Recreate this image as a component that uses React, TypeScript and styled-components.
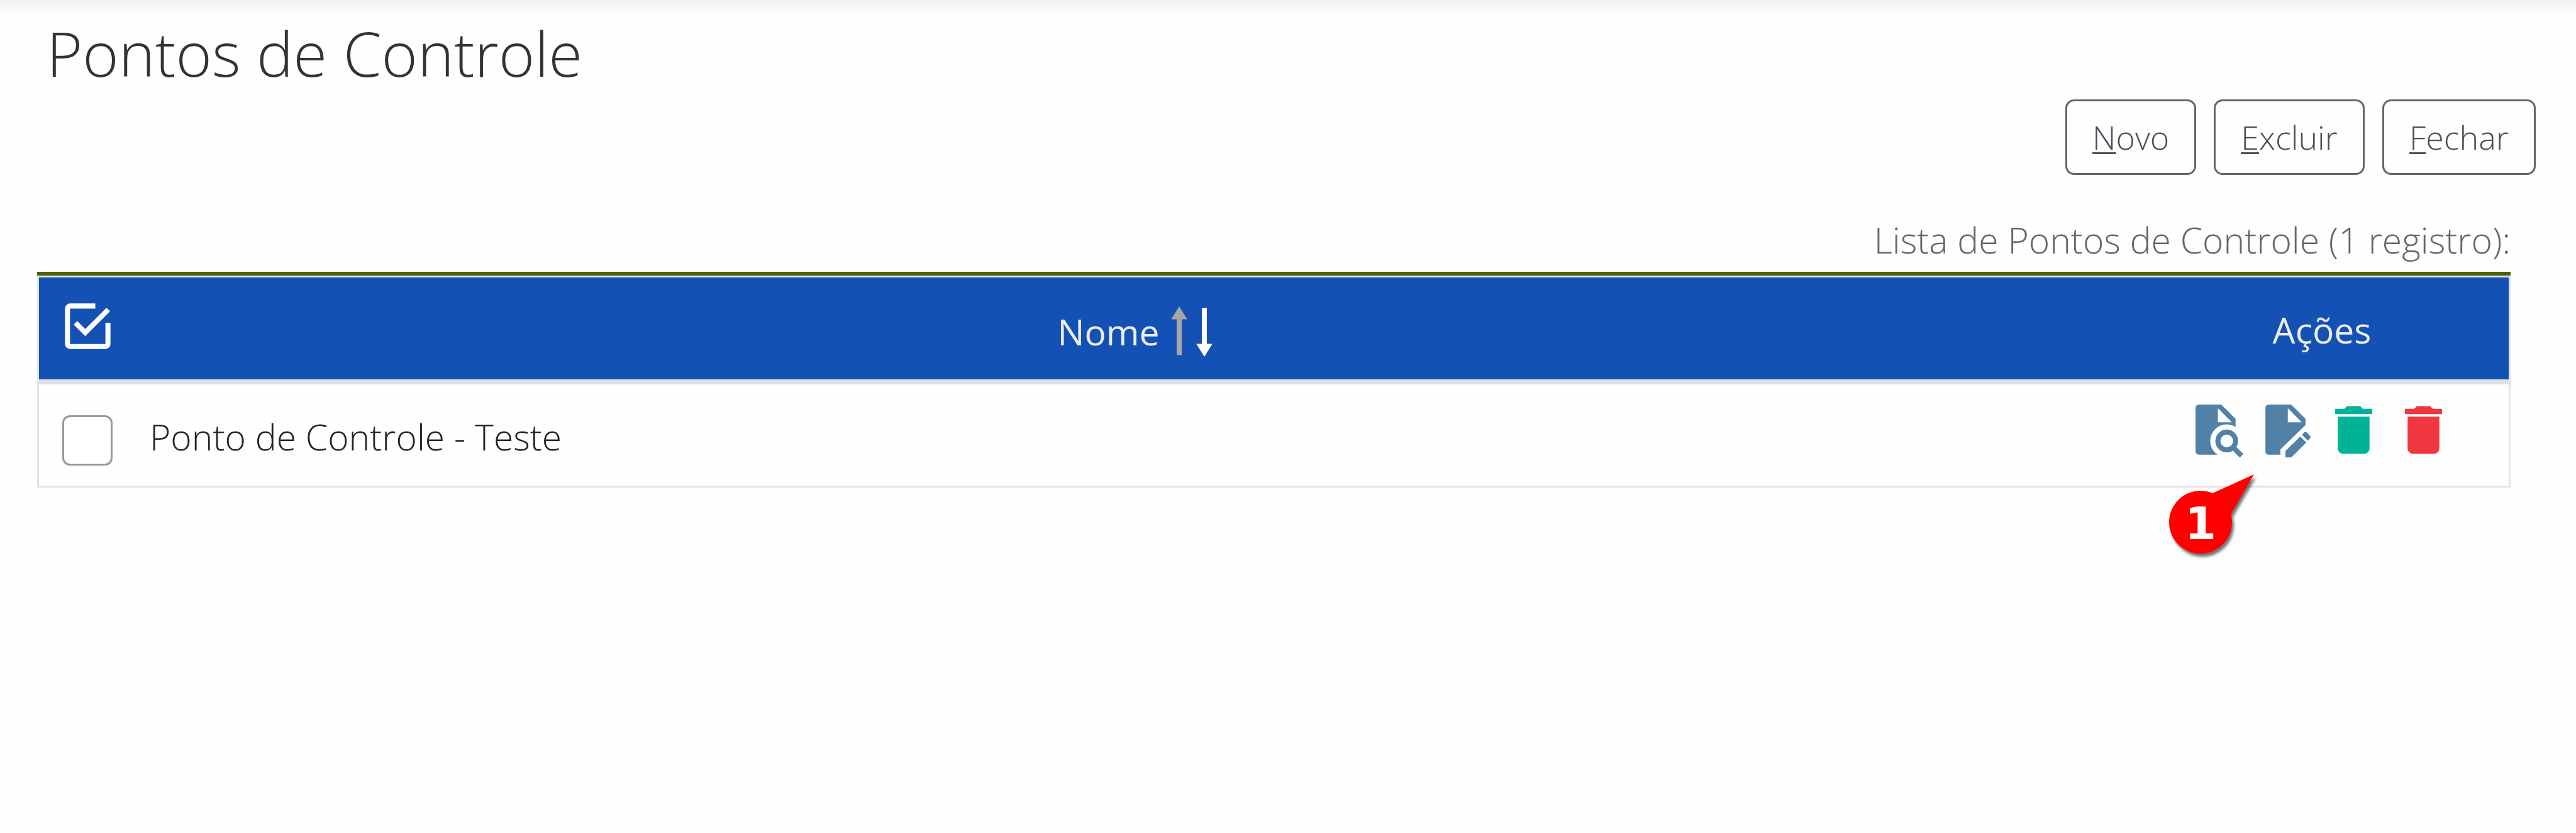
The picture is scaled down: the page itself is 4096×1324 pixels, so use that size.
import React, { useState } from "react";
import styled, { createGlobalStyle } from "styled-components";

const GlobalStyle = createGlobalStyle`
  *, *::before, *::after { box-sizing: border-box; }
  body {
    margin: 0;
    background: #fefefe;
    color: #212529;
    font-family: "Open Sans", Lato, sans-serif;
    font-size: 57px;
    font-weight: 300;
    line-height: 80px;
  }
  button, input { font: inherit; margin: 0; }
`;

const Page = styled.main`
  min-height: 100vh;
  padding-bottom: 64px;
  background: linear-gradient(#f0f0f0, #fefefe) top / 100% 24px no-repeat;
`;

const Title = styled.h1`
  margin: 0;
  padding: 28px 74px 18px;
  color: #333;
  font-size: 98px;
  font-weight: 300;
  line-height: 112px;
`;

const CommandBar = styled.div`
  display: flex;
  justify-content: flex-end;
  gap: 28px;
  padding-right: 64px;
`;

const CommandButton = styled.button`
  height: 120px;
  padding: 0 40px;
  border: 3px solid #666;
  border-radius: 14px;
  background: transparent;
  color: #495057;
  font-size: 52px;
  cursor: pointer;

  u {
    text-underline-offset: 4px;
    text-decoration-thickness: 3px;
    text-decoration-skip-ink: none;
  }
`;

const TableArea = styled.section`
  padding: 0 104px 0 59px;
`;

const Table = styled.table`
  width: 100%;
  table-layout: fixed;
  border: 3px solid #e3e3e3;
  border-spacing: 0;
`;

const Caption = styled.caption`
  padding: 63px 0 11px;
  border-bottom: 6px solid #4a6203;
  color: #666;
  text-align: right;
`;

const CheckColumn = styled.col`
  width: 160px;
`;

const ActionsColumn = styled.col`
  width: 594px;
`;

const HeadCell = styled.th`
  height: 170px;
  padding: 4px 0 0;
  border-bottom: 8px solid #dee2e6;
  background: #1351b4;
  color: #ededed;
  font-weight: 400;
  text-align: center;
`;

const Cell = styled.td`
  height: 161px;
  padding: 0;
`;

const CheckSlot = styled.div<{ $head?: boolean }>`
  display: flex;
  padding: ${(p) => (p.$head ? "0 0 12px 40px" : "16px 0 0 37px")};
`;

const SortHeading = styled.div`
  display: flex;
  align-items: center;
  justify-content: center;
  gap: 12px;
  padding-top: 6px;
`;

const SortButtons = styled.div`
  display: flex;
`;

const IconButton = styled.button<{ $color?: string; $width?: string }>`
  display: flex;
  width: ${(p) => p.$width ?? "auto"};
  padding: 0;
  border: 0;
  background: transparent;
  color: ${(p) => p.$color ?? "#fff"};
  cursor: pointer;
`;

const CheckBox = styled.input`
  appearance: none;
  width: 80px;
  height: 80px;
  border: 3px solid #999;
  border-radius: 12px;
  background: #fff;

  &:checked {
    background: #1351b4;
  }
`;

const RowLabel = styled.label`
  display: block;
  padding: 4px 16px 0;
`;

const RowActions = styled.div`
  position: relative;
  display: flex;
  gap: 15px;
  padding: 0 0 12px 96px;
`;

const Callout = styled.div`
  position: absolute;
  top: 110px;
  left: 43px;
  width: 150px;
  height: 140px;
`;

const CalloutShape = styled.svg`
  display: block;
  overflow: visible;
  filter: drop-shadow(3px 5px 2px rgba(0, 0, 0, 0.55));
`;

const CalloutNumber = styled.span`
  position: absolute;
  top: 29px;
  left: 11px;
  width: 100px;
  color: #fff;
  font: bold 72px/100px "DejaVu Sans", sans-serif;
  text-align: center;
`;

const DocShape = ({ edge }: { edge: string }) => (
  <>
    <path d={`M2 0H15.4L24 8.6V${edge}H2A2 2 0 0 1 0 28V2A2 2 0 0 1 2 0Z`} fill="currentColor" />
    <path d="M13.4 2.2V10.6H21.8Z" fill="#fefefe" />
  </>
);

const SelectAllIcon = () => (
  <svg width="75" height="75" viewBox="0 0 28 28" fill="none" stroke="currentColor" strokeWidth="3" aria-hidden="true">
    <path d="M18.5 2H3.5A1.5 1.5 0 0 0 2 3.5V24.5A1.5 1.5 0 0 0 3.5 26H24.5A1.5 1.5 0 0 0 26 24.5V12" />
    <path d="M6.7 12L12.5 17.8L26.2 4.1" />
  </svg>
);

const ArrowIcon = ({ down }: { down?: boolean }) => (
  <svg width="40" height="80" viewBox="0 0 15 30" fill="currentColor" aria-hidden="true">
    <path d={down ? "M6 1H9V22.3H12.3L7.5 30L2.7 22.3H6Z" : "M6 29H9V7.7H12.3L7.5 0L2.7 7.7H6Z"} />
  </svg>
);

const ViewIcon = () => (
  <svg width="77" height="85" viewBox="0 0 29 32" aria-hidden="true">
    <DocShape edge="30" />
    <circle cx="18.7" cy="21.8" r="9.9" fill="#fefefe" />
    <path d="M13.5 29H24.5V32H13.5Z" fill="#fefefe" />
    <circle cx="18.7" cy="21.8" r="5.3" fill="none" stroke="currentColor" strokeWidth="3" />
    <path d="M22.4 25.5L27.6 30.7" stroke="currentColor" strokeWidth="3" />
  </svg>
);

const EditIcon = () => (
  <svg width="72" height="85" viewBox="0 0 27 32" aria-hidden="true">
    <DocShape edge="12.2L9 26.8V30" />
    <g fill="currentColor">
      <path d="M12 31.6V27.8L20.9 19.1L24.5 22.7L15.6 31.6Z" />
      <path d="M21.9 18.1L23.3 16.7Q24 16.1 24.7 16.7L26.7 18.7Q27.3 19.4 26.7 20.2L25.4 21.6Z" />
    </g>
  </svg>
);

const TrashIcon = () => (
  <svg width="59" height="85" viewBox="5 2.4 14 20.2" fill="currentColor" aria-hidden="true">
    <path d="M6 19c0 1.1.9 2 2 2h8c1.1 0 2-.9 2-2V7H6v12zM19 4h-3.5l-1-1h-5l-1 1H5v2h14V4z" />
  </svg>
);

const commands = ["Novo", "Excluir", "Fechar"];

const rowActions = [
  { label: "Consultar", color: "#5181a6", Icon: ViewIcon },
  { label: "Alterar", color: "#5181a6", Icon: EditIcon },
  { label: "Desativar", color: "#00b396", Icon: TrashIcon },
  { label: "Excluir registro", color: "#f0373f", Icon: TrashIcon },
];

export default function App() {
  const [selected, setSelected] = useState(false);

  return (
    <>
      <GlobalStyle />
      <Page>
        <Title>Pontos de Controle</Title>
        <CommandBar>
          {commands.map((name) => (
            <CommandButton key={name} type="button" accessKey={name[0]}>
              <u>{name[0]}</u>
              {name.slice(1)}
            </CommandButton>
          ))}
        </CommandBar>
        <TableArea>
          <Table>
            <Caption>Lista de Pontos de Controle (1 registro):</Caption>
            <colgroup>
              <CheckColumn />
              <col />
              <ActionsColumn />
            </colgroup>
            <thead>
              <tr>
                <HeadCell scope="col">
                  <CheckSlot $head>
                    <IconButton type="button" aria-label="Selecionar tudo" onClick={() => setSelected(!selected)}>
                      <SelectAllIcon />
                    </IconButton>
                  </CheckSlot>
                </HeadCell>
                <HeadCell scope="col">
                  <SortHeading>
                    Nome
                    <SortButtons>
                      <IconButton type="button" $color="#a6a6a6" aria-label="Ordem crescente">
                        <ArrowIcon />
                      </IconButton>
                      <IconButton type="button" aria-label="Ordem decrescente">
                        <ArrowIcon down />
                      </IconButton>
                    </SortButtons>
                  </SortHeading>
                </HeadCell>
                <HeadCell scope="col">Ações</HeadCell>
              </tr>
            </thead>
            <tbody>
              <tr>
                <Cell>
                  <CheckSlot>
                    <CheckBox
                      id="ponto-1"
                      type="checkbox"
                      checked={selected}
                      onChange={(e) => setSelected(e.target.checked)}
                    />
                  </CheckSlot>
                </Cell>
                <Cell>
                  <RowLabel htmlFor="ponto-1">Ponto de Controle - Teste</RowLabel>
                </Cell>
                <Cell>
                  <RowActions>
                    {rowActions.map(({ label, color, Icon }) => (
                      <IconButton key={label} type="button" $color={color} $width="96px" aria-label={label}>
                        <Icon />
                      </IconButton>
                    ))}
                    <Callout>
                      <CalloutShape width="150" height="140" viewBox="0 0 150 140" fill="#f00" aria-hidden="true">
                        <circle cx="61" cy="77" r="50" />
                        <path d="M80 31L146 1L110 63L61 77Z" />
                      </CalloutShape>
                      <CalloutNumber>1</CalloutNumber>
                    </Callout>
                  </RowActions>
                </Cell>
              </tr>
            </tbody>
          </Table>
        </TableArea>
      </Page>
    </>
  );
}
